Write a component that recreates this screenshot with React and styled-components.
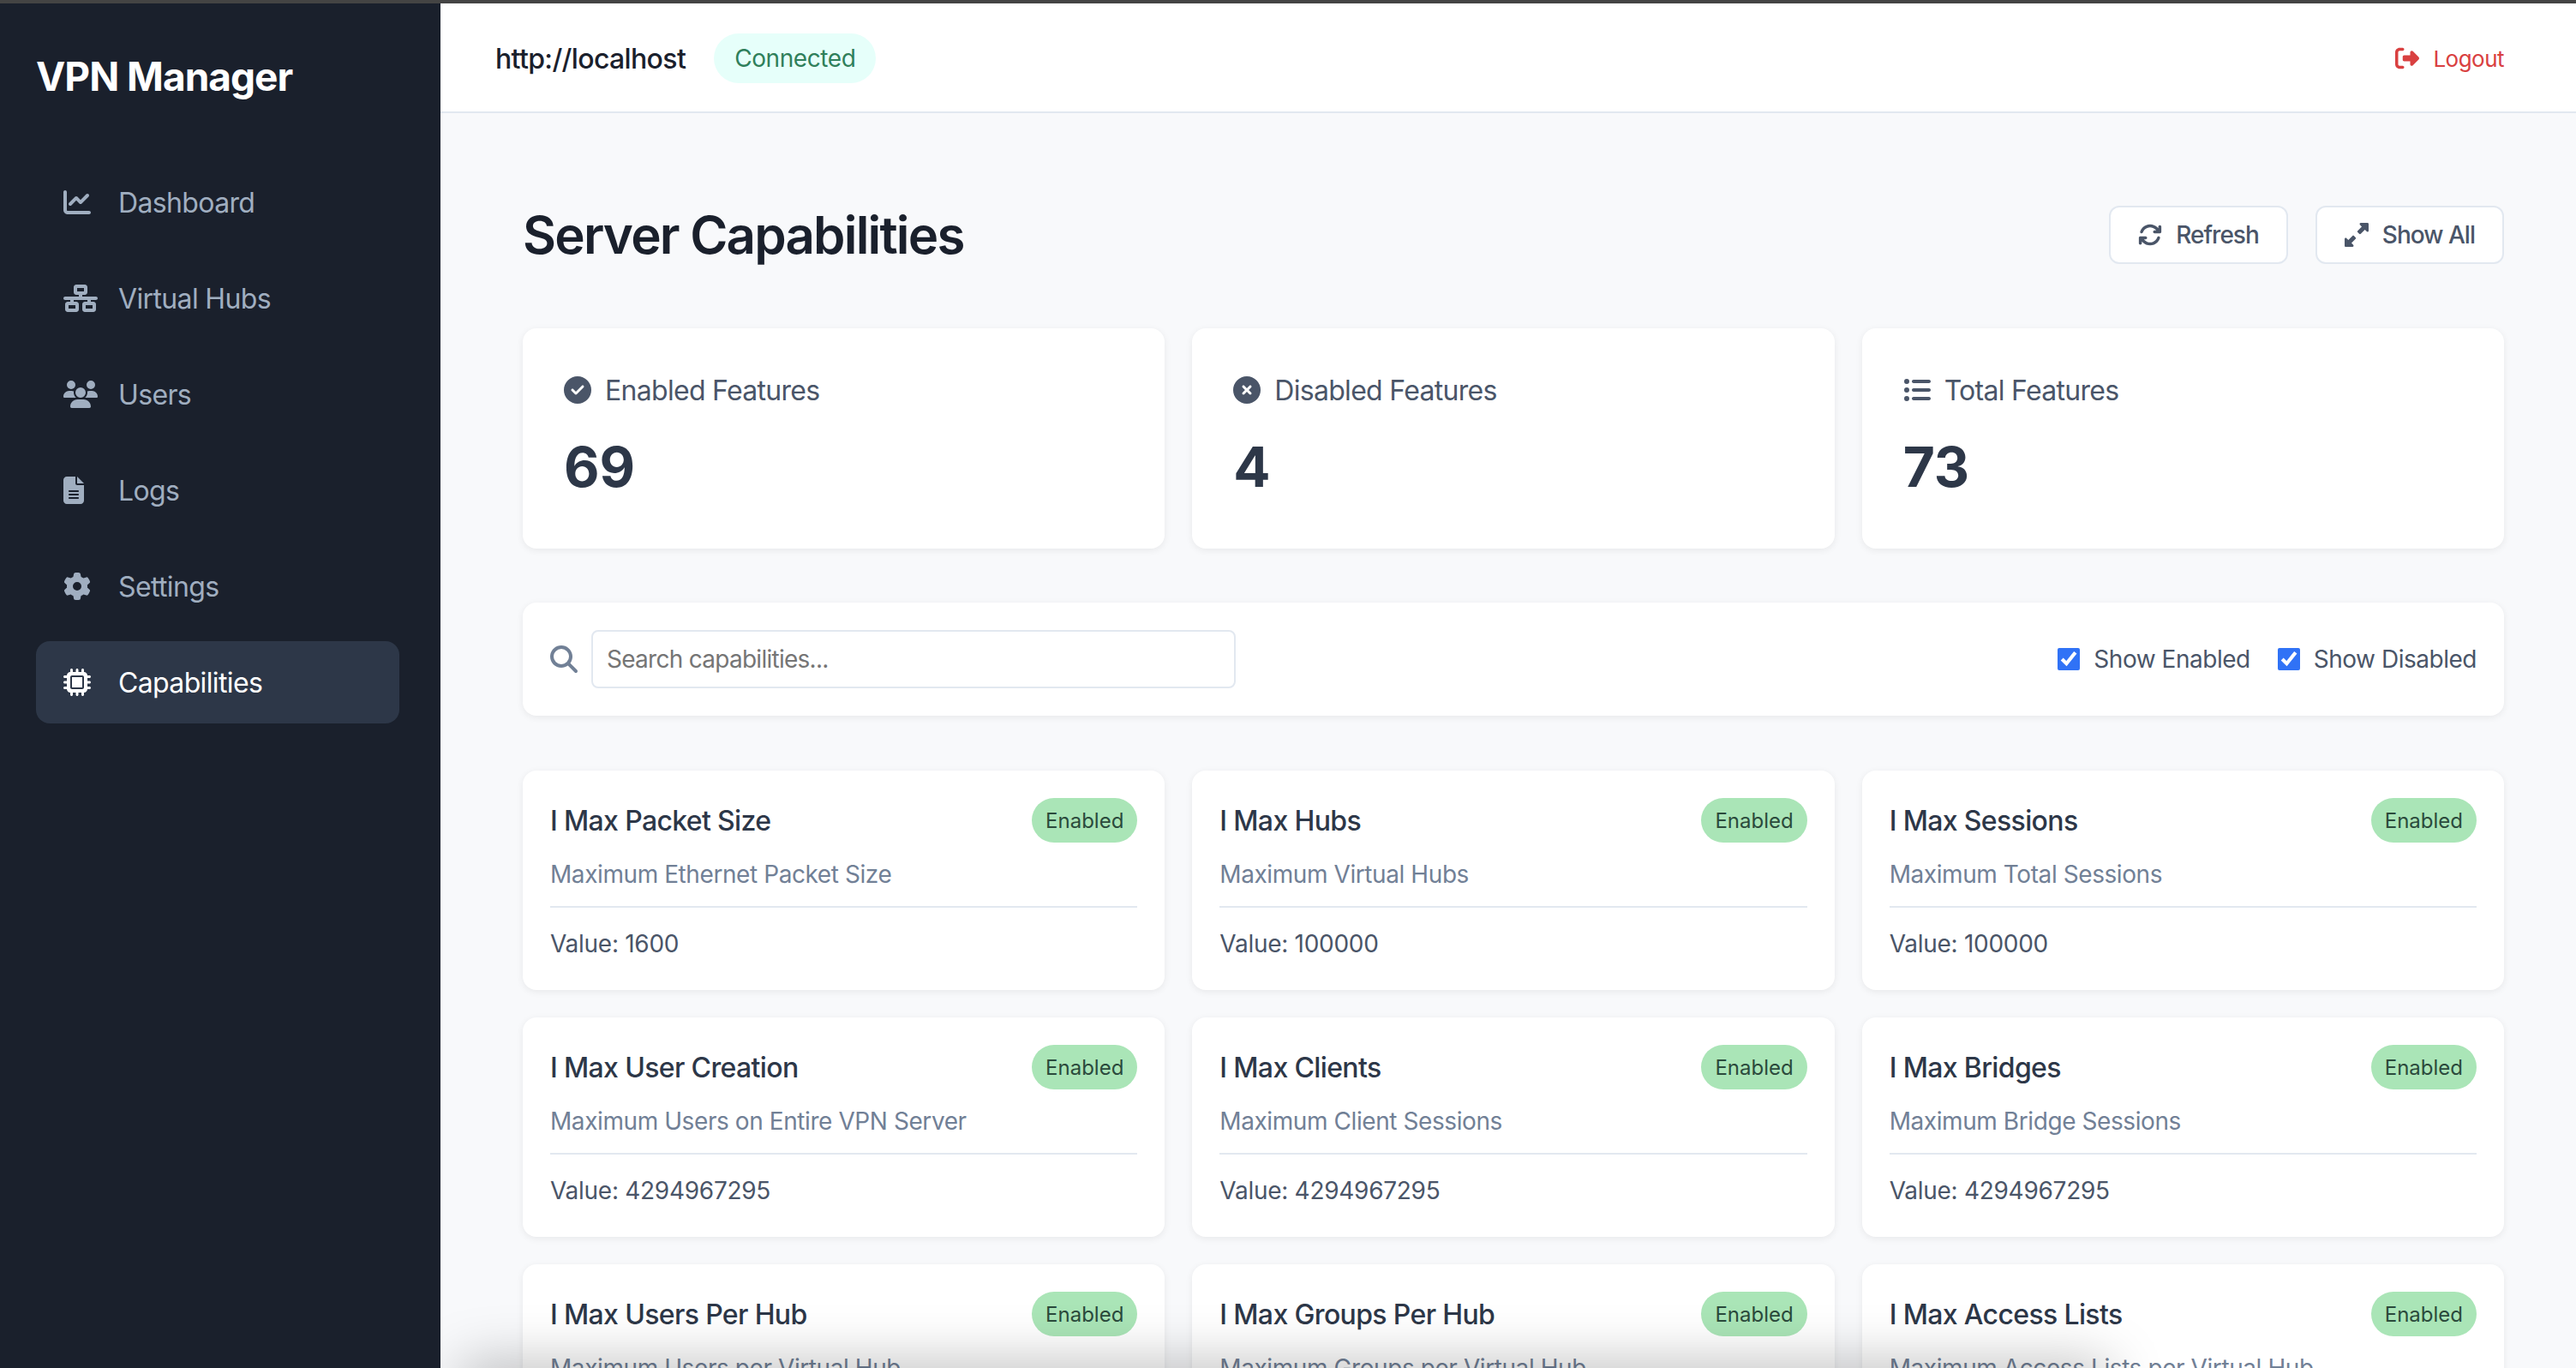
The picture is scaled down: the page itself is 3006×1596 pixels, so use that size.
import styled, { createGlobalStyle } from "styled-components";
import {
  FaChartLine,
  FaNetworkWired,
  FaUsers,
  FaFileLines,
  FaGear,
  FaMicrochip,
  FaRightFromBracket,
  FaArrowsRotate,
  FaUpRightAndDownLeftFromCenter,
  FaCircleCheck,
  FaCircleXmark,
  FaListUl,
  FaMagnifyingGlass,
} from "react-icons/fa6";

// iconWidth follows each glyph's viewBox at 32px tall
const navItems = [
  { label: "Dashboard", icon: FaChartLine, iconWidth: 32 },
  { label: "Virtual Hubs", icon: FaNetworkWired, iconWidth: 40 },
  { label: "Users", icon: FaUsers, iconWidth: 40 },
  { label: "Logs", icon: FaFileLines, iconWidth: 24 },
  { label: "Settings", icon: FaGear, iconWidth: 32 },
  { label: "Capabilities", icon: FaMicrochip, iconWidth: 32, active: true },
];

const stats = [
  { label: "Enabled Features", value: 69, icon: FaCircleCheck },
  { label: "Disabled Features", value: 4, icon: FaCircleXmark },
  { label: "Total Features", value: 73, icon: FaListUl },
];

const capabilities = [
  { name: "I Max Packet Size", desc: "Maximum Ethernet Packet Size", value: "1600" },
  { name: "I Max Hubs", desc: "Maximum Virtual Hubs", value: "100000" },
  { name: "I Max Sessions", desc: "Maximum Total Sessions", value: "100000" },
  { name: "I Max User Creation", desc: "Maximum Users on Entire VPN Server", value: "4294967295" },
  { name: "I Max Clients", desc: "Maximum Client Sessions", value: "4294967295" },
  { name: "I Max Bridges", desc: "Maximum Bridge Sessions", value: "4294967295" },
  { name: "I Max Users Per Hub", desc: "Maximum Users per Virtual Hub", value: "4294967295" },
  { name: "I Max Groups Per Hub", desc: "Maximum Groups per Virtual Hub", value: "4294967295" },
  { name: "I Max Access Lists", desc: "Maximum Access Lists per Virtual Hub", value: "4294967295" },
];

function App() {
  return (
    <>
      <GlobalStyle />
      <TopLine />
      <Shell>
        <Sidebar>
          <Brand>VPN Manager</Brand>
          <Nav>
            {navItems.map((item) => (
              <NavItem key={item.label} $active={item.active}>
                <NavIcon $width={item.iconWidth}>
                  <item.icon />
                </NavIcon>
                {item.label}
              </NavItem>
            ))}
          </Nav>
        </Sidebar>
        <Main>
          <Header>
            <ServerInfo>
              <ServerUrl>http://localhost</ServerUrl>
              <StatusPill>Connected</StatusPill>
            </ServerInfo>
            <LogoutLink>
              <FaRightFromBracket size={28} />
              Logout
            </LogoutLink>
          </Header>
          <Content>
            <TitleRow>
              <Title>Server Capabilities</Title>
              <Actions>
                <ActionButton>
                  <FaArrowsRotate size={28} />
                  Refresh
                </ActionButton>
                <ActionButton>
                  <FaUpRightAndDownLeftFromCenter size={28} />
                  Show All
                </ActionButton>
              </Actions>
            </TitleRow>
            <StatsGrid>
              {stats.map((stat) => (
                <StatCard key={stat.label}>
                  <StatLabel>
                    <stat.icon size={32} />
                    {stat.label}
                  </StatLabel>
                  <StatValue>{stat.value}</StatValue>
                </StatCard>
              ))}
            </StatsGrid>
            <FilterCard>
              <SearchGroup>
                <SearchIcon>
                  <FaMagnifyingGlass size={32} />
                </SearchIcon>
                <SearchInput placeholder="Search capabilities..." />
              </SearchGroup>
              <Toggles>
                <Toggle>
                  <input type="checkbox" defaultChecked />
                  Show Enabled
                </Toggle>
                <Toggle>
                  <input type="checkbox" defaultChecked />
                  Show Disabled
                </Toggle>
              </Toggles>
            </FilterCard>
            <CapabilityGrid>
              {capabilities.map((cap) => (
                <CapabilityCard key={cap.name}>
                  <CardHead>
                    <CardName>{cap.name}</CardName>
                    <EnabledBadge>Enabled</EnabledBadge>
                  </CardHead>
                  <CardDesc>{cap.desc}</CardDesc>
                  <CardValue>Value: {cap.value}</CardValue>
                </CapabilityCard>
              ))}
            </CapabilityGrid>
          </Content>
          <BottomShade />
        </Main>
      </Shell>
    </>
  );
}

export default App;

const GlobalStyle = createGlobalStyle`
  * {
    box-sizing: border-box;
  }
  html, body {
    margin: 0;
    height: 1596px;
    overflow: hidden;
    background: #f8f9fb;
    font-family: Inter, "Liberation Sans", sans-serif;
  }
`;

const TopLine = styled.div`
  height: 4px;
  background: #444444;
`;

const Shell = styled.div`
  display: flex;
  height: 1592px;
`;

const Sidebar = styled.aside`
  width: 514px;
  flex-shrink: 0;
  padding: 0 48px 0 42px;
  background: #1a202c;
`;

const Brand = styled.h1`
  margin: 0;
  padding-top: 56px;
  height: 184px;
  font-size: 46px;
  line-height: 58px;
  font-weight: 700;
  letter-spacing: -1px;
  color: #fff;
`;

const Nav = styled.nav`
  display: flex;
  flex-direction: column;
  gap: 16px;
`;

const NavItem = styled.a`
  display: flex;
  align-items: center;
  height: 96px;
  padding: 0 32px;
  border-radius: 16px;
  font-size: 32px;
  letter-spacing: -0.02em;
  color: ${(p) => (p.$active ? "#fff" : "#a0aec0")};
  background: ${(p) => (p.$active ? "#2d3748" : "transparent")};
`;

const NavIcon = styled.span`
  display: flex;
  width: 64px;
  svg {
    height: 32px;
    width: ${(p) => p.$width}px;
  }
`;

const Main = styled.main`
  position: relative;
  flex: 1;
  min-width: 0;
  overflow: hidden;
`;

const Header = styled.header`
  display: flex;
  align-items: center;
  justify-content: space-between;
  height: 128px;
  padding: 2px 84px 0 64px;
  background: #fff;
  border-bottom: 2px solid #e2e8f0;
`;

const ServerInfo = styled.div`
  display: flex;
  align-items: center;
  gap: 33px;
`;

const ServerUrl = styled.span`
  font-size: 32px;
  font-weight: 500;
  letter-spacing: -0.02em;
  color: #1a202c;
`;

const StatusPill = styled.span`
  display: flex;
  align-items: center;
  height: 58px;
  padding: 0 24px;
  border-radius: 29px;
  background: #e6fffa;
  color: #2f7f5a;
  font-size: 28px;
  letter-spacing: -0.015em;
`;

const LogoutLink = styled.a`
  display: flex;
  align-items: center;
  gap: 16px;
  color: #d94040;
  font-size: 26px;
  letter-spacing: -0.02em;
`;

const Content = styled.div`
  padding: 108px 84px 0 96px;
`;

const TitleRow = styled.div`
  display: flex;
  align-items: center;
  justify-content: space-between;
  height: 68px;
  margin-bottom: 75px;
`;

const Title = styled.h2`
  margin: 0;
  font-size: 60px;
  font-weight: 600;
  letter-spacing: -1.8px;
  color: #1a202c;
`;

const Actions = styled.div`
  display: flex;
  gap: 32px;
`;

const ActionButton = styled.button`
  display: flex;
  align-items: center;
  gap: 16px;
  height: 68px;
  padding: 0 32px;
  background: #fff;
  border: 2px solid #e2e8f0;
  border-radius: 12px;
  color: #4a5568;
  font: 500 28px Inter, sans-serif;
  letter-spacing: -0.035em;
`;

const Card = styled.div`
  background: #fff;
  border-radius: 16px;
  box-shadow: 0 2px 8px rgba(0, 0, 0, 0.07);
`;

const StatsGrid = styled.div`
  display: grid;
  grid-template-columns: repeat(3, 1fr);
  gap: 32px;
  margin-bottom: 63px;
`;

const StatCard = styled(Card)`
  height: 257px;
  padding: 52px 48px 0;
`;

const StatLabel = styled.div`
  display: flex;
  align-items: center;
  gap: 16px;
  height: 40px;
  font-size: 32px;
  letter-spacing: -0.022em;
  color: #4a5568;
`;

const StatValue = styled.div`
  margin-top: 26px;
  font-size: 64px;
  line-height: 88px;
  font-weight: 700;
  color: #2d3748;
`;

const FilterCard = styled(Card)`
  display: flex;
  align-items: center;
  justify-content: space-between;
  height: 132px;
  padding: 0 32px;
  margin-bottom: 64px;
`;

const SearchGroup = styled.div`
  display: flex;
  align-items: center;
  gap: 16px;
`;

const SearchIcon = styled.span`
  display: flex;
  color: #718096;
`;

const SearchInput = styled.input`
  width: 752px;
  height: 68px;
  padding: 0 16px;
  border: 2px solid #e2e8f0;
  border-radius: 8px;
  font: 28px Inter, sans-serif;
  letter-spacing: -0.026em;
  color: #2d3748;
  outline: none;
`;

const Toggles = styled.div`
  display: flex;
  gap: 32px;
`;

const Toggle = styled.label`
  display: flex;
  align-items: center;
  gap: 16px;
  font-size: 28px;
  letter-spacing: -0.017em;
  color: #4a5568;
  input {
    width: 26px;
    height: 26px;
    margin: 0;
    accent-color: #3072f6;
  }
`;

const CapabilityGrid = styled.div`
  display: grid;
  grid-template-columns: repeat(3, 1fr);
  gap: 32px;
`;

const CapabilityCard = styled(Card)`
  height: 256px;
  padding: 32px;
`;

const CardHead = styled.div`
  display: flex;
  align-items: center;
  justify-content: space-between;
  height: 52px;
  margin-bottom: 18px;
`;

const CardName = styled.div`
  font-size: 32px;
  font-weight: 500;
  letter-spacing: -0.02em;
  color: #2d3748;
`;

const EnabledBadge = styled.span`
  display: flex;
  align-items: center;
  height: 52px;
  padding: 0 16px;
  border-radius: 26px;
  background: #aae5b7;
  color: #2b4a3c;
  font-size: 24px;
`;

const CardDesc = styled.div`
  padding-bottom: 18px;
  border-bottom: 2px solid #e2e8f0;
  font-size: 28px;
  line-height: 38px;
  letter-spacing: -0.015em;
  color: #718096;
`;

const CardValue = styled.div`
  margin-top: 23px;
  font-size: 28px;
  line-height: 38px;
  letter-spacing: -0.01em;
  color: #4a5568;
`;

const BottomShade = styled.div`
  position: absolute;
  left: 30px;
  bottom: -50px;
  width: 1910px;
  height: 50px;
  box-shadow: 0 0 64px 6px rgba(0, 0, 0, 0.26);
  pointer-events: none;
`;
